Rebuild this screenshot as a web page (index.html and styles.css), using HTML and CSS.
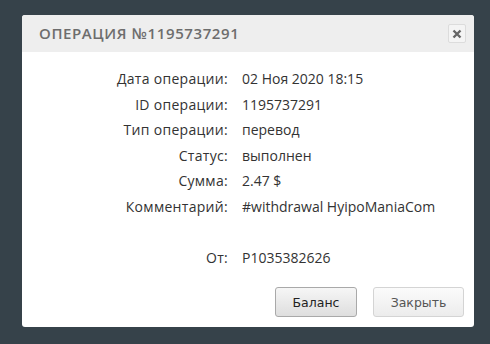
FILE: index.html
```html
<!DOCTYPE html>
<html lang="ru">
<head>
<meta charset="utf-8">
<link rel="stylesheet" href="styles.css">
</head>
<body>
<div class="modal">
  <div class="modal-header">
    <div class="title">Операция №1195737291</div>
    <div class="close"><svg width="10" height="10" viewBox="0 0 10 10"><path d="M1.5 1.5 L8.5 8.5 M8.5 1.5 L1.5 8.5" stroke="#666" stroke-width="2.4" stroke-linecap="butt"/></svg></div>
  </div>
  <div class="modal-body">
    <div class="details">
      <div class="label">Дата операции:</div><div class="value">02 Ноя 2020 18:15</div>
      <div class="label">ID операции:</div><div class="value">1195737291</div>
      <div class="label">Тип операции:</div><div class="value">перевод</div>
      <div class="label">Статус:</div><div class="value">выполнен</div>
      <div class="label">Сумма:</div><div class="value">2.47 $</div>
      <div class="label">Комментарий:</div><div class="value">#withdrawal HyipoManiaCom</div>
      <div class="label">&nbsp;</div><div class="value">&nbsp;</div>
      <div class="label">От:</div><div class="value">P1035382626</div>
    </div>
    <div class="actions">
      <button class="btn btn-primary">Баланс</button>
      <button class="btn btn-light">Закрыть</button>
    </div>
  </div>
</div>
</body>
</html>
```
FILE: styles.css
```css
html, body {
  margin: 0;
  padding: 0;
}
body {
  background: #36424a;
  width: 490px;
  height: 344px;
  overflow: hidden;
  padding: 15px 0 0 22px;
  box-sizing: border-box;
}
.modal {
  width: 452px;
  height: 312px;
  background: #fff;
  border-radius: 3px;
  display: flex;
  flex-direction: column;
  overflow: hidden;
}
.modal-header {
  height: 37px;
  background: #eeeeee;
  display: flex;
  align-items: center;
  justify-content: space-between;
  padding: 0 8px 0 17px;
}
.title {
  font-family: "Open Sans", sans-serif;
  font-weight: 600;
  font-size: 15px;
  text-transform: uppercase;
  color: #6d6d6d;
  letter-spacing: 0.6px;
  margin-top: -1px;
}
.close {
  width: 16px;
  height: 17px;
  border: 1px solid #dcdcdc;
  border-radius: 2px;
  background: #f4f4f4;
  display: flex;
  align-items: center;
  justify-content: center;
}
.modal-body {
  flex: 1;
  display: flex;
  flex-direction: column;
  padding: 14px 10px 10px 0;
}
.details {
  display: grid;
  grid-template-columns: 206px auto;
  column-gap: 14px;
  row-gap: 0;
  font-family: "Open Sans", sans-serif;
  font-size: 14px;
  color: #333;
  justify-content: start;
}
.label {
  text-align: right;
  line-height: 25.5px;
  letter-spacing: 0.3px;
}
.value {
  line-height: 25.5px;
}
.actions {
  margin-top: auto;
  display: flex;
  justify-content: flex-end;
  gap: 16px;
  padding-right: 0;
}
.btn {
  font-family: "DejaVu Sans", sans-serif;
  font-size: 12.5px;
  height: 30px;
  border-radius: 3px;
  padding: 0;
}
.btn-primary {
  width: 82px;
  color: #222;
  border: 1px solid #a9a9a9;
  background: linear-gradient(#f6f6f6, #dedede);
}
.btn-light {
  width: 91px;
  color: #555;
  border: 1px solid #d4d4d4;
  background: linear-gradient(#fbfbfb, #ececec);
}
```
